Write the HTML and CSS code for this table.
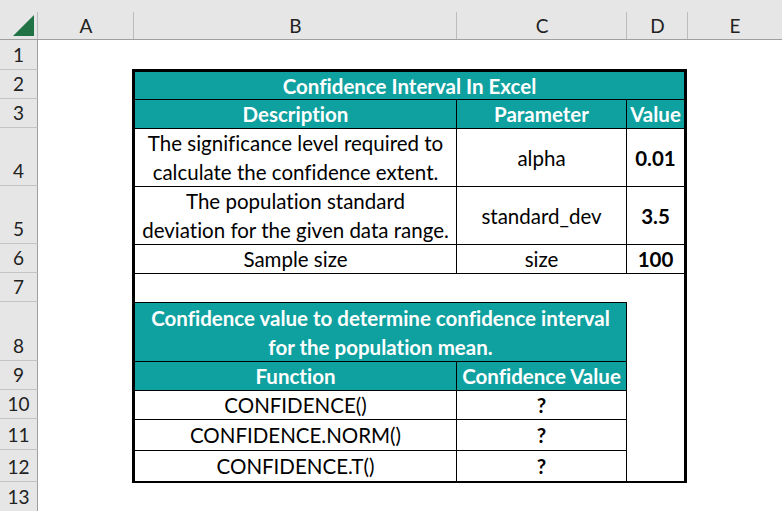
FILE: index.html
```html
<!DOCTYPE html>
<html>
<head>
<meta charset="utf-8">
<link rel="stylesheet" href="styles.css">
</head>
<body>
<div class="sheet">
  <div class="corner"><svg width="38" height="40" viewBox="0 0 38 40"><polygon points="13,36 34,15 34,36" fill="#217346"/></svg></div>
  <div class="colhead">A</div>
  <div class="colhead">B</div>
  <div class="colhead">C</div>
  <div class="colhead">D</div>
  <div class="colhead last">E</div>

  <div class="rowhead r1">1</div>
  <div class="rowhead r2">2</div>
  <div class="rowhead r3">3</div>
  <div class="rowhead r4">4</div>
  <div class="rowhead r5">5</div>
  <div class="rowhead r6">6</div>
  <div class="rowhead r7">7</div>
  <div class="rowhead r8">8</div>
  <div class="rowhead r9">9</div>
  <div class="rowhead r10">10</div>
  <div class="rowhead r11">11</div>
  <div class="rowhead r12">12</div>
  <div class="rowhead r13">13</div>

  <div class="box">
    <div class="cell teal span3 bb">Confidence Interval In Excel</div>

    <div class="cell teal br bb">Description</div>
    <div class="cell teal br bb">Parameter</div>
    <div class="cell teal bb">Value</div>

    <div class="cell br bb"><span>The significance level required to<br>calculate the confidence extent.</span></div>
    <div class="cell br bb">alpha</div>
    <div class="cell bb bold">0.01</div>

    <div class="cell br bb"><span>The population standard<br>deviation for the given data range.</span></div>
    <div class="cell br bb">standard_dev</div>
    <div class="cell bb bold">3.5</div>

    <div class="cell br bb">Sample size</div>
    <div class="cell br bb">size</div>
    <div class="cell bb bold">100</div>

    <div class="cell span2 bb"></div>
    <div class="cell dfill"></div>

    <div class="cell teal span2 br bb"><span>Confidence value to determine confidence interval<br>for the population mean.</span></div>

    <div class="cell teal br bb">Function</div>
    <div class="cell teal br bb">Confidence Value</div>

    <div class="cell br bb">CONFIDENCE()</div>
    <div class="cell br bb bold">?</div>

    <div class="cell br bb">CONFIDENCE.NORM()</div>
    <div class="cell br bb bold">?</div>

    <div class="cell br">CONFIDENCE.T()</div>
    <div class="cell br bold">?</div>
  </div>
</div>
</body>
</html>
```

FILE: styles.css
```css
html, body {
  margin: 0;
  padding: 0;
  background: #ffffff;
}
body {
  width: 782px;
  height: 511px;
  overflow: hidden;
  font-family: Lato, "Liberation Sans", sans-serif;
  font-variant-ligatures: none;
}
.sheet {
  display: grid;
  grid-template-columns: 38px 96px 323px 170px 61px 1fr;
  grid-template-rows: 40px 30px 29px 29px 58px 58px 29px 29px 59px 29px 29px 31px 32px 29px;
  width: 782px;
  height: 511px;
}
.corner {
  background: #e6e6e6;
  border-bottom: 1px solid #9f9f9f;
  box-sizing: border-box;
  position: relative;
}
.corner svg {
  display: block;
}
.corner::after {
  content: "";
  position: absolute;
  right: 0;
  top: 12px;
  bottom: 0;
  width: 1px;
  background: #b9b9b9;
}
.colhead {
  background: #e6e6e6;
  border-bottom: 1px solid #9f9f9f;
  box-sizing: border-box;
  padding-top: 12px;
  display: flex;
  align-items: center;
  justify-content: center;
  font-size: 19px;
  color: #222;
  position: relative;
}
.colhead::after {
  content: "";
  position: absolute;
  right: 0;
  top: 12px;
  bottom: 0;
  width: 1px;
  background: #bcbcbc;
}
.colhead.last::after {
  display: none;
}
.rowhead {
  grid-column: 1;
  background: #e6e6e6;
  border-right: 1px solid #9f9f9f;
  border-bottom: 1px solid #c4c4c4;
  box-sizing: border-box;
  display: flex;
  align-items: flex-end;
  justify-content: center;
  font-size: 19px;
  line-height: 28px;
  color: #222;
}
.r13 { border-bottom: none; }

.box {
  grid-column: 3 / 6;
  grid-row: 3 / 14;
  margin: -1px 1px -1px -2px;
  border-style: solid;
  border-color: #000;
  border-width: 3px 3px 2px 3px;
  display: grid;
  grid-template-columns: 322px 170px 57px;
  grid-template-rows: 28px 29px 58px 58px 29px 29px 59px 29px 29px 31px 30px;
  font-size: 20.5px;
  color: #000;
}
.cell {
  box-sizing: border-box;
  display: flex;
  align-items: center;
  justify-content: center;
  text-align: center;
  line-height: 29px;
  white-space: nowrap;
  padding-top: 1px;
}
.teal {
  background: #0fa19f;
  color: #fff;
  font-weight: 700;
}
.bold { font-weight: 700; }
.br { border-right: 1px solid #000; }
.bb { border-bottom: 1px solid #000; }
.span3 { grid-column: 1 / 4; }
.span2 { grid-column: 1 / 3; }
.dfill {
  grid-column: 3;
  grid-row: 6 / 12;
}
```
